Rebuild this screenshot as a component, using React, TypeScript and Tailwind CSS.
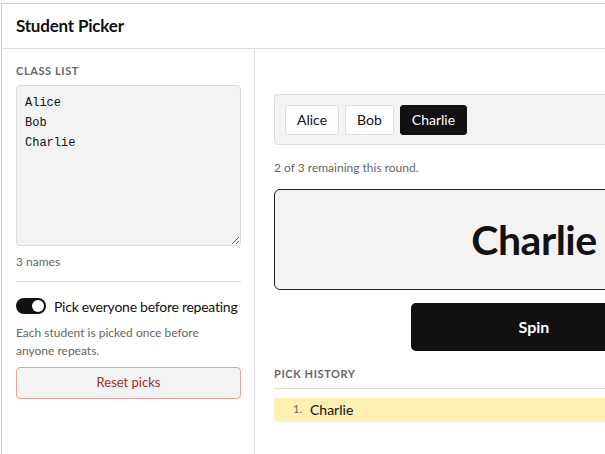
import { useState } from 'react';

const names = ['Alice', 'Bob', 'Charlie'];

export default function App() {
  const [picked] = useState('Charlie');
  const [noRepeat, setNoRepeat] = useState(true);

  return (
    <div className="h-[454px] w-[605px] overflow-hidden bg-white pl-[1px] pt-[3px] font-['Lato','Noto_Sans',sans-serif] text-[#111]">
      <div className="flex h-[460px] w-[820px] flex-col border-l border-t border-[#cfcfcf]">
        {/* Header */}
        <div className="flex h-[45px] shrink-0 items-center border-b border-[#dcdcdc] px-[14px]">
          <h1 className="text-[17px] font-bold tracking-[-0.2px]">Student Picker</h1>
        </div>

        <div className="flex flex-1">
          {/* Sidebar */}
          <aside className="w-[253px] shrink-0 border-r border-[#dcdcdc] px-[14px] pt-[14px]">
            <div className="text-[11px] font-bold uppercase tracking-[0.6px] text-[#666]">Class list</div>
            <textarea
              className="mt-[5px] block h-[161px] w-[225px] resize-y rounded-[4px] border border-[#dadada] bg-[#f3f3f3] px-[8px] py-[7px] font-['Liberation_Mono',monospace] text-[12px] leading-[20px] text-[#111] outline-none"
              defaultValue={names.join('\n')}
            />
            <div className="mt-[7px] text-[12px] text-[#666]">{names.length} names</div>
            <div className="mt-[10px] w-[225px] border-t border-[#dcdcdc]" />

            <label className="mt-[14px] flex items-center gap-[8px] whitespace-nowrap">
              <button
                onClick={() => setNoRepeat(!noRepeat)}
                className={`flex h-[16px] w-[30px] shrink-0 items-center rounded-full px-[2px] ${noRepeat ? 'justify-end bg-[#111]' : 'justify-start bg-[#bbb]'}`}
              >
                <span className="h-[12px] w-[12px] rounded-full bg-white" />
              </button>
              <span className="text-[14px] tracking-[-0.25px]">Pick everyone before repeating</span>
            </label>
            <p className="mt-[7px] w-[200px] text-[12px] leading-[18px] text-[#666]">
              Each student is picked once before anyone repeats.
            </p>
            <button className="mt-[7px] h-[32px] w-[225px] rounded-[4px] border border-[#e4a3a3] bg-[#f3f3f3] text-[13px] text-[#a12a2a]">
              Reset picks
            </button>
          </aside>

          {/* Main */}
          <main className="w-[539px] pl-[19px] pt-[45px]">
            <div className="flex h-[51px] items-center gap-[6px] rounded-[4px] border border-[#dcdcdc] bg-[#f3f3f3] px-[10px]">
              {names.map((n) => (
                <span
                  key={n}
                  className={`flex h-[30px] items-center rounded-[3px] border px-[11px] text-[14px] ${n === picked ? 'border-[#111] bg-[#111] text-white' : 'border-[#dcdcdc] bg-white text-[#111]'}`}
                >
                  {n}
                </span>
              ))}
            </div>
            <div className="mt-[14px] text-[12px] text-[#666]">2 of 3 remaining this round.</div>

            <div className="mt-[12px] flex h-[101px] items-center justify-center rounded-[6px] border-[1.5px] border-[#222] bg-[#f3f3f3]">
              <span className="text-[41px] font-bold tracking-[-0.5px]">{picked}</span>
            </div>

            <div className="mt-[13px] flex justify-center">
              <button className="h-[48px] w-[246px] rounded-[5px] bg-[#111] text-[16px] font-bold text-white">Spin</button>
            </div>

            <div className="mt-[15px] border-b border-[#dcdcdc] pb-[5px] text-[11px] font-bold uppercase tracking-[0.6px] text-[#666]">
              Pick history
            </div>
            <ol className="mt-[9px]">
              <li className="flex h-[24px] items-center rounded-[3px] bg-[#fdf0b0] pl-[19px]">
                <span className="w-[17px] text-[11px] text-[#666]">1.</span>
                <span className="text-[14px]">Charlie</span>
              </li>
            </ol>
          </main>
        </div>
      </div>
    </div>
  );
}
